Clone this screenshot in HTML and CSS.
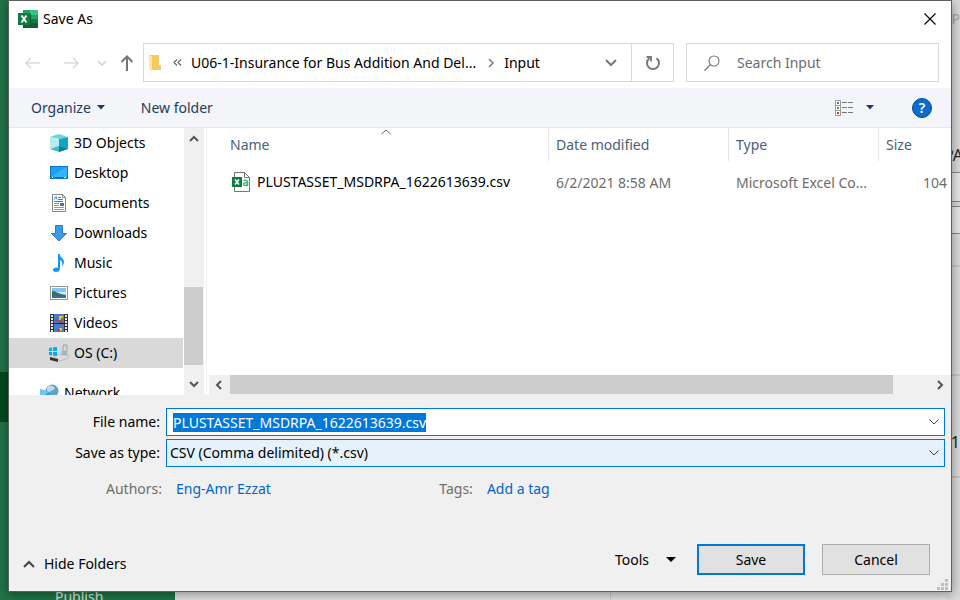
FILE: index.html
```html
<!DOCTYPE html>
<html lang="en">
<head>
<meta charset="utf-8">
<title>Save As</title>
<link rel="stylesheet" href="styles.css">
</head>
<body>
<div class="app">
  <nav class="backstage">
    <div class="backstage-current"></div>
    <a class="backstage-link" href="#">Publish</a>
  </nav>
  <main class="page">
    <div class="page-divider"></div>
    <div class="page-edge">
      <div class="edge-title">RP</div>
      <div class="edge-name">PA</div>
      <div class="edge-field"></div>
      <div class="edge-field edge-field-second"></div>
      <div class="edge-rule"></div>
      <div class="edge-rule edge-rule-far"></div>
      <div class="edge-count">61</div>
      <div class="edge-rule edge-rule-end"></div>
    </div>
  </main>
</div>

<section class="dialog" role="dialog" aria-labelledby="dialog-title">
  <header class="titlebar">
    <svg class="app-icon" width="20" height="20" viewBox="0 0 20 20">
      <path fill="#21a366" d="M5 1h7v5H5z"/><path fill="#33c481" d="M12 1h8v5h-8z"/>
      <path fill="#107c41" d="M5 6h7v8H5z"/><path fill="#21a366" d="M12 6h8v4h-8z"/>
      <path fill="#107c41" d="M12 10h8v4h-8z"/><path fill="#185c37" d="M5 14h15v5H5z"/>
      <path fill="#0b5a30" d="M5 5h8v11H5z"/><rect y="4" width="12" height="12" fill="#107c41"/>
      <path d="M3.500 6.500l5 7M8.500 6.500l-5 7" stroke="#fff" stroke-width="1.900"/>
    </svg>
    <h1 id="dialog-title">Save As</h1>
    <button class="close" aria-label="Close"><svg width="12" height="12" viewBox="0 0 12 12"><path d="M.5.5l11 11M11.500.5l-11 11" stroke="#000" stroke-width="1.100"/></svg></button>
  </header>

  <div class="navbar">
    <div class="history">
      <button class="nav-back" aria-label="Back"><svg width="16" height="12" viewBox="0 0 16 12"><path d="M6 1L1 6l5 5M1 6h14" fill="none" stroke="#dcdcdc" stroke-width="1.700"/></svg></button>
      <button class="nav-forward" aria-label="Forward"><svg width="16" height="12" viewBox="0 0 16 12"><path d="M10 1l5 5-5 5M15 6H1" fill="none" stroke="#dcdcdc" stroke-width="1.700"/></svg></button>
      <button class="nav-recent" aria-label="Recent locations"><svg width="10" height="6" viewBox="0 0 10 6"><path d="M1 1l4 4 4-4" fill="none" stroke="#d0d0d0" stroke-width="1.500"/></svg></button>
      <button class="nav-up" aria-label="Up"><svg width="14" height="16" viewBox="0 0 14 16"><path d="M1.500 7L7 1.500 12.500 7M7 2v14" fill="none" stroke="#757575" stroke-width="2"/></svg></button>
    </div>
    <div class="address">
      <svg class="folder" width="12" height="18" viewBox="0 0 12 18"><path fill="#f5c95d" d="M0 1h10v10l2 1v4H2z"/><path fill="#f1cb69" d="M8 1h2v10h2v5H8z"/><path fill="#ffe6a3" d="M0 1l3 2v15l-3-3z"/></svg>
      <button class="crumb-more" aria-label="Parent folders"><svg width="9" height="7" viewBox="0 0 9 7"><path d="M4 .5l-3 3 3 3M8 .5l-3 3 3 3" fill="none" stroke="#666" stroke-width="1.200"/></svg></button>
      <a class="crumb" href="#">U06-1-Insurance for Bus Addition And Del...</a>
      <svg class="crumb-sep" width="6" height="10" viewBox="0 0 6 10"><path d="M1 1l4 4-4 4" fill="none" stroke="#777" stroke-width="1.500"/></svg>
      <a class="crumb" href="#">Input</a>
      <button class="address-open" aria-label="Previous locations"><svg width="12" height="8" viewBox="0 0 12 8"><path d="M1 1l5 5 5-5" fill="none" stroke="#777" stroke-width="2"/></svg></button>
      <button class="refresh" aria-label="Refresh"><svg width="16" height="16" viewBox="0 0 16 16"><path d="M11.500 3.200A6 6 0 1 1 4.500 3.200" fill="none" stroke="#777" stroke-width="2"/><path d="M1.500 2H6v4.500" fill="none" stroke="#777" stroke-width="1.800"/></svg></button>
    </div>
    <label class="search">
      <svg width="16" height="16" viewBox="0 0 16 16"><circle cx="10" cy="6" r="5" fill="none" stroke="#777" stroke-width="1.100"/><path d="M6.500 9.500L.5 15.500" stroke="#777" stroke-width="1.300"/></svg>
      <input type="search" placeholder="Search Input" aria-label="Search Input">
    </label>
  </div>

  <div class="toolbar">
    <button class="organize">Organize <svg width="8" height="5" viewBox="0 0 8 5"><path d="M0 0h8L4 4.500z" fill="#1c3a63"/></svg></button>
    <button class="new-folder">New folder</button>
    <button class="view" aria-label="Change your view">
      <svg width="19" height="16" viewBox="0 0 19 16"><path d="M.5.5h5v15h-5zM.5 5.500h5M.5 10.500h5" fill="#fff" stroke="#999"/><path d="M7 2.500h5M13 2.500h5M7 7.500h5M13 7.500h5M7 12.500h5M13 12.500h5" stroke="#777"/><path fill="#4179b8" d="M2 2h2v2H2z"/><path fill="#72813b" d="M2 7h2v2H2z"/><path fill="#c43a1d" d="M2 12h2v2H2z"/></svg>
      <svg width="8" height="5" viewBox="0 0 8 5"><path d="M0 0h8L4 4.500z" fill="#1c3a63"/></svg>
    </button>
    <button class="help" aria-label="Help">?</button>
  </div>

  <div class="browser">
    <ul class="tree">
      <li><svg width="18" height="18" viewBox="0 0 18 18"><path fill="#6fd3dc" d="M0 3l9-3 9 3-9 2z"/><path fill="#b6ecef" d="M0 3l9 2v8l-9 2z"/><path fill="#14a3c7" d="M18 3L9 5v8l9 2z"/><path fill="#3fbccb" d="M0 15l9-3 9 3-9 3z"/><path fill="#077f98" d="M9 12l9 3-9 3z"/></svg>3D Objects</li>
      <li><svg width="18" height="18" viewBox="0 0 18 18"><rect x=".5" y="2.500" width="17" height="12" fill="#18a0fb" stroke="#0b76c4"/><path d="M1 13L16 3h1v11z" fill="#37b0ff"/><path d="M1 13.500h16" stroke="#0873bd"/><path d="M2 13.500h1M14 13.500h2" stroke="#fff"/></svg>Desktop</li>
      <li><svg width="18" height="18" viewBox="0 0 18 18"><path fill="#fff" stroke="#888" d="M2.500.5h10l3 3v14h-13z"/><path d="M12.500.5v3h3" fill="none" stroke="#888"/><path d="M4 5.500l2-3 1 3M8 3.500h3M8 5.500h5M4 7.500h9" stroke="#2388c9" fill="none"/><path d="M4 9.500h5M4 11.500h5M4 13.500h10M4 15.500h10" stroke="#999"/><path fill="#3979ad" d="M10 9h4v3h-4z"/></svg>Documents</li>
      <li><svg width="18" height="18" viewBox="0 0 18 18"><path fill="#3c99e8" stroke="#2b7bc7" d="M5.500 1.500h7v8h4L9 17 1.500 9.500h4z"/></svg>Downloads</li>
      <li><svg width="18" height="18" viewBox="0 0 18 18"><path fill="#0a9bf5" d="M8 0h2c0 4 4 4 4 8 0 2-1 3-2 4 1-4-.5-5-2-6v8c0 3-2 4-4 4s-3-1-3-2c0-2 3-3 5-2z"/></svg>Music</li>
      <li><svg width="18" height="18" viewBox="0 0 18 18"><rect x=".5" y="2.500" width="17" height="13" fill="#fff" stroke="#999"/><path fill="#86c3ee" d="M2 4h14v10H2z"/><path fill="#d6edf8" d="M2 8h14v3H2z"/><path fill="#376f68" d="M2 7c4 0 6 3 14 4v1H2z"/><path fill="#2c75a8" d="M2 12h14v2H2z"/></svg>Pictures</li>
      <li><svg width="18" height="18" viewBox="0 0 18 18"><path fill="#343434" d="M0 0h18v18H0z"/><path fill="#477dce" d="M4 0h10v18H4z"/><path fill="#efbf34" d="M9 2h4v4H9zM9 14h3v3H9z"/><path fill="#cc3832" d="M5 5h3v3H5zM9 6h3v3H9zM7 15h3v2H7z"/><path fill="#4e8a3c" d="M5 7h3v1H5zM11 4h2v3h-2z"/><path d="M4 9.500h10" stroke="#222"/><path d="M2 1v17M16 1v17" stroke="#e5e5e5" stroke-width="2" stroke-dasharray="2 1"/></svg>Videos</li>
      <li class="selected"><svg width="20" height="18" viewBox="0 0 20 18"><path fill="#ddd" stroke="#aaa" stroke-width=".6" d="M5 12l9-3 5 2v3l-8 3z"/><path fill="#353535" d="M1 13l8 2v3l-8-2z"/><path fill="#00adef" d="M0 4l3-.5V7H0zM4 3.300L8 3v4H4zM0 8h3v3.500L0 11zM4 8h4v4l-4-.4z"/><path d="M14 7V3c0-3 4-3 4 0v4" fill="none" stroke="#a9b4bb" stroke-width="1.500"/><rect x="12" y="6" width="7" height="6" fill="#b9cbd5"/><path d="M13 8h5M13 10h5" stroke="#8ba1af"/></svg>OS (C:)</li>
      <li class="root"><svg width="19" height="18" viewBox="0 0 19 18"><circle cx="12" cy="7" r="6.500" fill="#5da4c4"/><path d="M8 2c3-1 5 0 7 2-1 3-5 2-6 5-2-1-3-4-1-7z" fill="#b9deeb"/><path fill="#219be0" d="M0 5l9 3v10l-9-2z"/><path fill="#73c5f4" d="M0 5l9 3-9 7z"/></svg>Network</li>
    </ul>
    <div class="vscroll" aria-hidden="true">
      <svg width="10" height="7" viewBox="0 0 10 7"><path d="M1 6l4-4 4 4" fill="none" stroke="#555" stroke-width="2"/></svg>
      <div class="vtrack"><div class="vthumb"></div></div>
      <svg width="10" height="7" viewBox="0 0 10 7"><path d="M1 1l4 4 4-4" fill="none" stroke="#555" stroke-width="2"/></svg>
    </div>
    <div class="files">
      <svg class="sort" width="10" height="6" viewBox="0 0 10 6"><path d="M.5 5L5 1l4.500 4" fill="none" stroke="#666"/></svg>
      <table>
        <colgroup><col><col class="col-date"><col class="col-type"><col class="col-size"></colgroup>
        <thead><tr><th>Name</th><th>Date modified</th><th>Type</th><th>Size</th></tr></thead>
        <tbody><tr>
          <td class="file"><svg width="18" height="20" viewBox="0 0 18 20"><path d="M2.500.5h10l5 5v14h-15z" fill="#fff" stroke="#777"/><path d="M12.500.5v5h5" fill="none" stroke="#777"/><rect y="5" width="10" height="10" fill="#107c41"/><path d="M3 7.500l4 5M7 7.500l-4 5" stroke="#fff" stroke-width="1.500"/><path d="M11.500 8.500c3-1 4 0 4 1.500v4M15.500 10.500c-2 0-4 .3-4 1.800s3 1.700 4-.3" fill="none" stroke="#33b879" stroke-width="1.400"/></svg>PLUSTASSET_MSDRPA_1622613639.csv</td>
          <td>6/2/2021 8:58 AM</td><td>Microsoft Excel Co...</td><td class="size">104</td>
        </tr></tbody>
      </table>
      <div class="hscroll" aria-hidden="true">
        <svg width="7" height="10" viewBox="0 0 7 10"><path d="M6 1L2 5l4 4" fill="none" stroke="#555" stroke-width="2"/></svg>
        <div class="htrack"><div class="hthumb"></div></div>
        <svg width="7" height="10" viewBox="0 0 7 10"><path d="M1 1l4 4-4 4" fill="none" stroke="#555" stroke-width="2"/></svg>
      </div>
    </div>
  </div>

  <form class="details">
    <div class="fields">
      <label for="file-name">File name:</label>
      <div class="combo">
        <input id="file-name" type="text" value="PLUSTASSET_MSDRPA_1622613639.csv" autocomplete="off" spellcheck="false">
        <svg width="10" height="6" viewBox="0 0 10 6"><path d="M.5.5L5 5 9.500.5" fill="none" stroke="#444"/></svg>
      </div>
      <label for="file-type">Save as type:</label>
      <div class="combo combo-type">
        <select id="file-type"><option>CSV (Comma delimited) (*.csv)</option></select>
        <svg width="10" height="6" viewBox="0 0 10 6"><path d="M.5.5L5 5 9.500.5" fill="none" stroke="#444"/></svg>
      </div>
    </div>
    <div class="metadata">
      <span class="meta-label">Authors:</span><a href="#">Eng-Amr Ezzat</a>
      <span class="meta-label meta-tags">Tags:</span><a href="#">Add a tag</a>
    </div>
    <footer class="actions">
      <button type="button" class="hide-folders"><svg width="12" height="8" viewBox="0 0 12 8"><path d="M1 7l5-5 5 5" fill="none" stroke="#444" stroke-width="2"/></svg>Hide Folders</button>
      <button type="button" class="tools">Tools <svg width="10" height="5" viewBox="0 0 10 5"><path d="M0 0h10L5 5z"/></svg></button>
      <button type="button" class="push primary">Save</button>
      <button type="button" class="push">Cancel</button>
    </footer>
  </form>
  <svg class="grip" width="11" height="11" viewBox="0 0 11 11"><path fill="#bfbfbf" d="M8 0h3v3H8zM4 4h3v3H4zM8 4h3v3H8zM0 8h3v3H0zM4 8h3v3H4zM8 8h3v3H8z"/></svg>
</section>
<script src="script.js"></script>
</body>
</html>
```
FILE: styles.css
```css
* { box-sizing: border-box; }
body {
  margin: 0;
  height: 100vh;
  overflow: hidden;
  position: relative;
  font: 14px/20px "Noto Sans", "Open Sans", sans-serif;
  color: #000;
}
svg { display: block; flex: none; }
button, input, select { font: inherit; color: inherit; }
button { border: 0; padding: 0; background: none; display: flex; align-items: center; }
a { color: inherit; text-decoration: none; }

/* Application behind the dialog */
.app { display: flex; height: 100%; }
.backstage {
  width: 175px;
  background: #217346;
  color: #d5e5dc;
  display: flex;
  flex-direction: column;
}
.backstage-current { margin-top: 372px; height: 50px; background: #004b1c; }
.backstage-link { margin-top: auto; height: 13px; padding-left: 55px; }
.page { flex: 1; display: flex; background: #e1e1e1; }
.page-divider { margin-left: 435px; border-left: 1px solid #c8c8c8; }
.page-edge {
  margin-left: auto;
  width: 14px;
  background: #d9d9d9;
  display: flex;
  flex-direction: column;
  align-items: flex-end;
}
.edge-title { margin-top: 9px; color: #a5a5a5; }
.edge-name { margin: 116px -3px 0 0; font-size: 16px; height: 27px; color: #222; }
.edge-field { width: 100%; height: 30px; border: 1px solid #858585; border-right: 0; background: #e6e6e6; }
.edge-field-second { margin-top: 4px; height: 28px; }
.edge-rule { width: 100%; margin-top: 31px; border-top: 2px solid #c4c4c4; }
.edge-rule-far { margin-top: 107px; }
.edge-count { margin-top: 56px; font-size: 16px; color: #222; }
.edge-rule-end { margin-top: 24px; }

/* Dialog */
.dialog {
  position: absolute;
  inset: 0 8px 8px 8px;
  border: 1px solid #5f5f5f;
  background: #fff;
  box-shadow: 0 2px 10px rgba(0, 0, 0, .4);
  display: flex;
  flex-direction: column;
}
.titlebar { display: flex; align-items: center; height: 36px; padding: 0 15px 0 9px; }
.titlebar h1 { margin: 0 auto 0 5px; font: inherit; }

.navbar { display: flex; align-items: center; height: 51px; padding: 0 12px 0 16px; }
.history { display: flex; align-items: center; width: 118px; }
.nav-forward { margin-left: 22px; }
.nav-recent { margin-left: 18px; }
.nav-up { margin-left: 13px; }
.address {
  flex: 1;
  display: flex;
  align-items: center;
  height: 39px;
  border: 1px solid #d9d9d9;
  padding-left: 5px;
}
.crumb-more { margin: 0 9px 0 12px; }
.crumb { white-space: nowrap; }
.crumb-sep { margin: 0 10px 0 12px; }
.address-open { margin: 0 14px 0 auto; }
.refresh { width: 42px; height: 37px; border-left: 1px solid #d9d9d9; justify-content: center; }
.search {
  display: flex;
  align-items: center;
  gap: 17px;
  width: 253px;
  height: 39px;
  margin-left: 12px;
  padding-left: 17px;
  border: 1px solid #d9d9d9;
}
.search input { flex: 1; min-width: 0; border: 0; padding: 0; outline: 0; background: none; }
.search input::placeholder { color: #6d6d6d; opacity: 1; }

.toolbar {
  display: flex;
  align-items: center;
  height: 40px;
  padding: 0 19px 0 22px;
  background: #f4f5f8;
  border-bottom: 1px solid #e6e7ea;
  color: #1c3a63;
}
.organize { gap: 6px; }
.new-folder { margin-left: 36px; }
.view { gap: 12px; margin-left: auto; }
.help {
  width: 20px;
  height: 20px;
  margin-left: 38px;
  justify-content: center;
  border: 1px solid #044a8c;
  border-radius: 50%;
  background: #0a6ccd;
  color: #fff;
  font-weight: 600;
}

.browser { display: flex; height: 267px; }
.tree { width: 175px; margin: 0; padding: 0; list-style: none; overflow: hidden; }
.tree li { display: flex; align-items: center; gap: 6px; height: 30px; padding-left: 41px; white-space: nowrap; }
.tree .selected { gap: 5px; padding-left: 40px; margin-right: 1px; background: #d9d9d9; }
.tree .root { margin-top: 10px; padding-left: 31px; gap: 5px; }
.vscroll {
  width: 20px;
  padding: 7px 0;
  background: #f0f0f0;
  display: flex;
  flex-direction: column;
  align-items: center;
}
.vtrack { flex: 1; width: 100%; display: flex; flex-direction: column; justify-content: flex-end; padding: 0 1px 16px 0; }
.vthumb { height: 78px; background: #cdcdcd; }
.files {
  flex: 1;
  min-width: 0;
  position: relative;
  margin-left: 2px;
  border-left: 1px solid #f0f0f0;
  padding-left: 2px;
  display: flex;
  flex-direction: column;
}
.sort { position: absolute; left: 174px; top: 1px; }
table { width: 100%; table-layout: fixed; border-collapse: separate; border-spacing: 0; }
.col-date { width: 180px; }
.col-type { width: 150px; }
.col-size { width: 73px; }
th { height: 33px; padding: 0 7px; font-weight: 400; text-align: left; color: #4c607a; border-left: 1px solid #e5e5e5; }
th:first-child { border-left: 0; padding-left: 21px; }
td { height: 44px; padding: 0 8px; color: #6d6d6d; white-space: nowrap; }
.file { display: flex; align-items: center; gap: 7px; padding: 0 0 2px 23px; color: #000; }
.size { text-align: right; padding-right: 4px; }
.hscroll {
  display: flex;
  align-items: center;
  gap: 8px;
  height: 20px;
  margin-top: auto;
  padding: 0 7px 1px 6px;
  background: #f0f0f0;
}
.htrack { flex: 1; padding: 0 36px 0 0; }
.hthumb { height: 19px; background: #cdcdcd; }

.details { flex: 1; display: flex; flex-direction: column; background: #f0f0f0; padding: 13px 6px 16px 0; }
.fields { display: grid; grid-template-columns: 151px 1fr; column-gap: 6px; row-gap: 3px; align-items: center; }
.fields label { text-align: right; }
.combo { display: flex; align-items: center; height: 28px; border: 1px solid #0078d7; background: #fff; padding: 0 5px 0 6px; }
.combo-type { background: #e5f1fb; padding-left: 3px; }
.combo input, .combo select { flex: 1; min-width: 0; height: 26px; border: 0; padding: 0; margin: 0; outline: 0; background: none; appearance: none; }
.combo input::selection { background: #0078d7; color: #fff; }
.metadata { display: flex; margin-top: 12px; color: #0066cc; }
.meta-label { width: 153px; margin-right: 14px; text-align: right; color: #6d6d6d; }
.meta-tags { width: 202px; }
.actions { display: flex; align-items: center; margin-top: auto; padding-right: 15px; }
.hide-folders { gap: 9px; margin: 8px auto 0 14px; }
.tools { gap: 17px; margin-right: 21px; }
.push { justify-content: center; width: 108px; height: 31px; border: 1px solid #adadad; background: #e1e1e1; }
.primary { border: 2px solid #0078d7; margin-right: 17px; }
.grip { position: absolute; right: 3px; bottom: 1px; }
```
FILE: script.js
```js
const fileName = document.getElementById("file-name");
fileName.focus();
fileName.select();
```
